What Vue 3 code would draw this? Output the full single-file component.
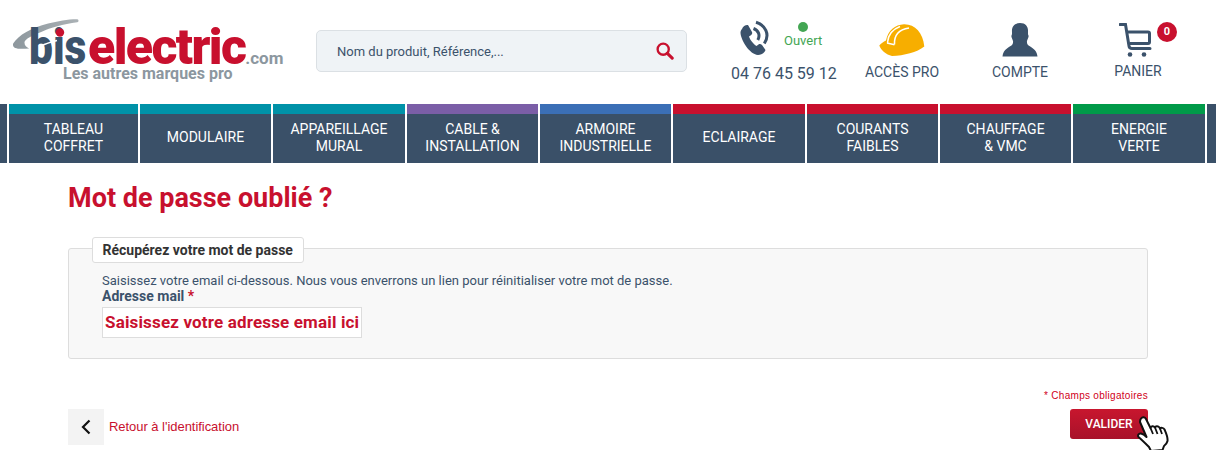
<script setup>
const nav = [
  { lines: ['TABLEAU', 'COFFRET'], color: '#0092a8' },
  { lines: ['MODULAIRE'], color: '#0092a8' },
  { lines: ['APPAREILLAGE', 'MURAL'], color: '#0092a8' },
  { lines: ['CABLE &', 'INSTALLATION'], color: '#7b5ea7' },
  { lines: ['ARMOIRE', 'INDUSTRIELLE'], color: '#3b6fb6' },
  { lines: ['ECLAIRAGE'], color: '#c8102e' },
  { lines: ['COURANTS', 'FAIBLES'], color: '#c8102e' },
  { lines: ['CHAUFFAGE', '& VMC'], color: '#c8102e' },
  { lines: ['ENERGIE', 'VERTE'], color: '#009a49' },
]
</script>

<template>
  <div class="page">
    <header class="header">
      <div class="logo">
        <svg class="swoosh" width="72" height="36" viewBox="0 0 72 36">
          <defs>
            <linearGradient id="sw" x1="0" x2="1" y1="0" y2="0">
              <stop offset="0" stop-color="#8d979d" />
              <stop offset="1" stop-color="#aab1b5" />
            </linearGradient>
          </defs>
          <path transform="translate(-3 0) scale(1.06 1)" d="M3 25.500C8 17 20 10 36 5.500C45 3 56 1 63.500 1.200C65 1.500 65 3.800 63.500 4.300C50 6 38 10 30 13.700C22 17 14 21 13.700 24C13.500 27 15 29 18 30.500C12 31 7 31 5 30C3 29 2.500 27 3 25.500Z" fill="url(#sw)" />
        </svg>
        <div class="wordmark"><span class="bis">bis</span><span class="electric">electric</span><span class="com">.com</span></div>
        <div class="tagline">Les autres marques pro</div>
        <svg class="logo-marks" width="72" height="36" viewBox="0 0 72 36" fill="none">
          <path d="M28 28C33 25.500 38 24 44 22.500" stroke="#fff" stroke-width="1.600" />
          <circle cx="47" cy="14.500" r="4.200" fill="#c8102e" />
        </svg>
      </div>

      <div class="search">
        <input class="search-input" type="text" placeholder="Nom du produit, Référence,..." />
        <svg width="18" height="18" viewBox="0 0 20 20" fill="none">
          <circle cx="8" cy="8" r="6.200" stroke="#c8102e" stroke-width="2.600" />
          <path d="M12.600 12.600L18 18" stroke="#c8102e" stroke-width="3.400" stroke-linecap="round" />
        </svg>
      </div>

      <div class="phone">
        <div class="phone-top">
          <svg class="phone-icon" width="32" height="33" viewBox="0 0 32 33">
            <path d="M2 6C3 3 6 1.500 8 2L12 9C12.500 10.500 12 11.500 10.500 12.500L9 13.500C10 17 13.500 21 16.500 23L18.500 21.500C19.500 20.800 21 21 22 22L25.500 27C24.500 30 21.500 32 18 32C9 31 1 17 .5 10C.4 8.500 1 7 2 6Z" fill="#3b526b" />
            <path d="M13.500 5.500C18.500 7.500 20.500 12 17.800 17M16 -.7C25 2 30.500 11 24.300 20.500" fill="none" stroke="#3b526b" stroke-width="3" />
          </svg>
          <div class="status">
            <span class="dot"></span>
            <span class="open">Ouvert</span>
          </div>
        </div>
        <div class="phone-number">04 76 45 59 12</div>
      </div>

      <div class="action">
        <svg width="46" height="33" viewBox="0 0 46 33">
          <path d="M7 17C9 7 16 1 25 .7C36 .5 44 9 45.300 23C38 29 25 32 13 32.500C7 31 2 27 .3 22C2 20 4.500 18 7 17Z" fill="#f7ae00" />
          <path d="M8.500 19C9 12 13 6 21 3M15.500 21C15 12 20 6 30 4.500M8 19.500L15.500 21.200" fill="none" stroke="#fff" stroke-width="1.500" />
        </svg>
        <span>ACCÈS PRO</span>
      </div>

      <div class="action">
        <svg width="36" height="34" viewBox="0 0 36 34">
          <path d="M18 0C24 0 26.500 4 26 9C26 11 26 12 26.500 12.500C27 14 25.500 16 25 18C24.800 19 25 21 26 22C28 24 35 26 35.500 33.500H.5C1 26 8 24 10 22C11 21 11.200 19 11 18C10.500 16 9 14 9.500 12.500C10 12 10 11 10 9C9.500 4 12 0 18 0Z" fill="#3b526b" />
        </svg>
        <span>COMPTE</span>
      </div>

      <div class="action cart">
        <svg width="34" height="34" viewBox="0 0 34 34" fill="none">
          <path d="M1 1.500H6.500L10 23C10.300 25 11 25.500 13 25.500H31" stroke="#3b526b" stroke-width="3" stroke-linecap="round" />
          <path d="M8 9H29C30 9 30.500 9.500 30.500 10.500V19C30.500 20 30 20.500 29 20.500H11" stroke="#3b526b" stroke-width="3" />
          <circle cx="11" cy="31.500" r="2.300" fill="#3b526b" />
          <circle cx="25" cy="31.500" r="2.300" fill="#3b526b" />
        </svg>
        <span>PANIER</span>
        <b class="badge">0</b>
      </div>
    </header>

    <nav class="nav">
      <div class="nav-stub"></div>
      <a v-for="item in nav" :key="item.lines[0]" class="nav-item" :style="{ borderTopColor: item.color }">
        <span v-for="line in item.lines" :key="line">{{ line }}</span>
      </a>
      <div class="nav-stub"></div>
    </nav>

    <main class="content">
      <h1 class="title">Mot de passe oublié ?</h1>

      <section class="box">
        <div class="legend">Récupérez votre mot de passe</div>
        <p class="intro">Saisissez votre email ci-dessous. Nous vous enverrons un lien pour réinitialiser votre mot de passe.</p>
        <label class="label" for="email">Adresse mail <em>*</em></label>
        <input id="email" class="email" type="text" placeholder="Saisissez votre adresse email ici" />
      </section>

      <p class="required">* Champs obligatoires</p>

      <div class="footer">
        <div class="back">
          <span class="back-btn">
            <svg width="12" height="16" viewBox="0 0 12 16" fill="none">
              <path d="M9.500 1.500L3 8L9.500 14.500" stroke="#111" stroke-width="2.200" />
            </svg>
          </span>
          <a class="back-link">Retour à l'identification</a>
        </div>
        <button class="submit" type="button">
          VALIDER
          <svg class="hand" width="33" height="36" viewBox="0 0 33 36">
            <path d="M4 2.500C5.500 .5 8 1 9 3L13.500 12C14 10 16.500 9.500 18 11.500C18.500 10 21 9.500 22.500 11.500L23 12.500C24 11.500 26.500 11.500 27.500 13.500C29.500 18 31 21 30.500 25C30 27 28.500 29 27 30L25.500 34L14 35L12 31C9 28 5 24 1.500 21C.5 19.500 1.500 17 4 17.500C6 18 8 19.500 9.500 21L3 6C3 4.500 3.300 3.500 4 2.500Z" fill="#fff" stroke="#111" stroke-width="2" stroke-linejoin="round" />
            <path d="M13.500 12L16 18M18 11.500L20.500 18M23 12.500L25 18" stroke="#111" stroke-width="1.800" fill="none" />
          </svg>
        </button>
      </div>
    </main>
  </div>
</template>

<style scoped>
.page {
  width: 1216px;
  height: 450px;
  overflow: hidden;
  background: #fff;
  font-family: Roboto, "Liberation Sans", sans-serif;
  color: #3b526b;
}

/* header */
.header {
  display: flex;
  align-items: flex-start;
  height: 104px;
  padding-left: 13px;
  box-sizing: border-box;
}
.logo {
  position: relative;
  width: 271px;
  height: 84px;
  flex: none;
}
.swoosh,
.logo-marks {
  position: absolute;
  left: 0;
  top: 18px;
}
.wordmark {
  position: relative;
  height: 36px;
  margin: 29px 0 0 16px;
  white-space: nowrap;
  font-weight: 900;
  line-height: 36px;
  font-size: 50px;
}
.bis {
  display: inline-block;
  width: 59px;
  color: #3b526b;
  transform: scaleX(.85);
  transform-origin: left;
}
.electric {
  color: #c8102e;
  letter-spacing: -1.600px;
}
.com {
  color: #8c979f;
  font-size: 17px;
  font-weight: 700;
  line-height: 1;
}
.tagline {
  margin-left: 50px;
  white-space: nowrap;
  font-size: 16px;
  font-weight: 700;
  line-height: 18px;
  color: #8c979f;
}

.search {
  display: flex;
  align-items: center;
  flex: none;
  width: 371px;
  height: 42px;
  margin: 30px 0 0 32px;
  padding: 0 12px 0 20px;
  box-sizing: border-box;
  background: #eff3f6;
  border: 1px solid #dbe0e4;
  border-radius: 5px;
}
.search-input {
  flex: 1;
  min-width: 0;
  height: 100%;
  padding: 0;
  border: 0;
  outline: 0;
  background: transparent;
  font: 400 13px Roboto, sans-serif;
}
.search-input::placeholder {
  color: #3b526b;
  opacity: 1;
}

.phone {
  flex: none;
  width: 106px;
  margin: 0 6px 0 44px;
}
.phone-top {
  display: flex;
  height: 33px;
  margin-top: 23px;
  padding-left: 9px;
}
.phone-icon {
  overflow: visible;
}
.status {
  display: flex;
  flex-direction: column;
  align-items: center;
  margin-left: 12px;
}
.dot {
  width: 10px;
  height: 10px;
  margin-top: -1px;
  border-radius: 50%;
  background: #43a653;
}
.open {
  margin-top: 2px;
  font-size: 13px;
  line-height: 14px;
  color: #43a653;
}
.phone-number {
  margin-top: 8px;
  font-size: 16px;
  line-height: 19px;
  white-space: nowrap;
}

.action {
  position: relative;
  display: flex;
  flex: none;
  flex-direction: column;
  align-items: center;
  width: 118px;
  padding-top: 23px;
  font-size: 14px;
  line-height: 16px;
}
.action svg {
  display: block;
  height: 34px;
  margin-bottom: 7px;
}
.cart span { margin-top: -1px; }
.cart svg { margin-left: -4px; }
.badge {
  position: absolute;
  left: 78px;
  top: 22px;
  width: 20px;
  height: 20px;
  border-radius: 50%;
  background: #c8102e;
  color: #fff;
  font-size: 11px;
  font-weight: 700;
  line-height: 20px;
  text-align: center;
}

/* navigation */
.nav {
  display: grid;
  grid-template-columns: 7px 129px 131px 132px 131px 131px 132px 131px 131px 132px 9px;
  gap: 2px;
  height: 59px;
}
.nav-stub {
  background: #3a5068;
}
.nav-item {
  display: flex;
  flex-direction: column;
  align-items: center;
  justify-content: center;
  padding-bottom: 2px;
  border-top: 10px solid;
  background: #3a5068;
  color: #fff;
  font-size: 14px;
  line-height: 17px;
}

/* content */
.content {
  position: relative;
  padding: 0 68px;
}
.title {
  margin: 0;
  padding-top: 20px;
  font-size: 27px;
  line-height: 30px;
  font-weight: 700;
  color: #c8102e;
}
.box {
  height: 111px;
  margin-top: 35px;
  padding: 0 33px;
  box-sizing: border-box;
  background: #f8f8f8;
  border: 1px solid #ddd;
  border-radius: 3px;
}
.legend {
  display: inline-block;
  height: 26px;
  margin: -12px 0 0 -10px;
  padding: 0 10px 0 9.500px;
  box-sizing: border-box;
  vertical-align: top;
  background: #fff;
  border: 1px solid #ddd;
  border-radius: 3px;
  color: #333;
  font-size: 14px;
  font-weight: 700;
  line-height: 24px;
}
.intro {
  margin: 5px 0 0;
  font-size: 13px;
  line-height: 15px;
}
.label {
  display: block;
  margin-top: 1px;
  font-size: 14px;
  font-weight: 700;
  line-height: 15px;
}
.label em {
  color: #c8102e;
  font-style: normal;
}
.email {
  display: block;
  width: 260px;
  height: 31px;
  margin-top: 3px;
  padding: 0 2px 2px;
  box-sizing: border-box;
  background: #fff;
  border: 1px solid #ddd;
  outline: 0;
  font: 700 17px Roboto, sans-serif;
  letter-spacing: .16px;
}
.email::placeholder {
  color: #c8102e;
  opacity: 1;
}
.required {
  margin: 31px 0 0;
  font-family: "Liberation Sans", sans-serif;
  font-size: 10px;
  line-height: 12px;
  letter-spacing: .29px;
  text-align: right;
  color: #d00020;
}
.footer {
  display: flex;
  align-items: flex-start;
  justify-content: space-between;
  margin-top: 7px;
}
.back {
  display: flex;
  align-items: center;
}
.back-btn {
  display: flex;
  align-items: center;
  justify-content: center;
  width: 36px;
  height: 36px;
  background: #f3f3f3;
}
.back-link {
  margin: 0 0 2px 5px;
  font-family: "Liberation Sans", sans-serif;
  font-size: 13px;
  letter-spacing: -.04px;
  color: #c8102e;
}
.submit {
  position: relative;
  width: 78px;
  height: 30px;
  padding: 0;
  border: 0;
  border-radius: 3px;
  background: linear-gradient(#c8162e, #a8122a);
  color: #fff;
  font: 500 12px Roboto, sans-serif;
  text-align: center;
}
.hand {
  position: absolute;
  left: 67px;
  top: 7px;
}
</style>
